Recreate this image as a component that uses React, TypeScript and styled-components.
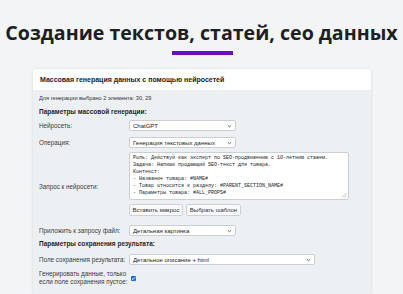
import React from "react";
import styled, { createGlobalStyle } from "styled-components";

const Global = createGlobalStyle`
  html, body { margin: 0; padding: 0; }
  body {
    background: #f2f4f6;
    font-family: "Liberation Sans", Arial, sans-serif;
    overflow: hidden;
  }
`;

const Page = styled.div`
  width: 403px;
  height: 294px;
  display: flex;
  flex-direction: column;
  align-items: stretch;
`;

const Hero = styled.header`
  display: flex;
  flex-direction: column;
  align-items: center;
  padding-top: 19px;
`;

const Title = styled.h1`
  margin: 0;
  font-family: "Open Sans", sans-serif;
  font-weight: 700;
  font-size: 19.6px;
  line-height: 27px;
  color: #1d1f22;
  white-space: nowrap;
`;

const Accent = styled.div`
  width: 61px;
  height: 4px;
  margin-top: 5px;
  margin-left: 2px;
  background: #6612bd;
`;

const Card = styled.section`
  margin: 14px 0 0 33px;
  width: 338px;
  flex: 1;
  background: #edf0f3;
  border-radius: 3px 3px 0 0;
  box-shadow: 0 0 3px rgba(0, 0, 0, 0.12);
  display: flex;
  flex-direction: column;
`;

const CardHeader = styled.div`
  height: 21px;
  background: #ffffff;
  border-radius: 3px 3px 0 0;
  display: flex;
  align-items: center;
  padding-left: 7px;
  font-weight: 700;
  font-size: 7px;
  color: #222;
`;

const CardBody = styled.div`
  padding: 4px 0 0 6px;
  display: flex;
  flex-direction: column;
`;

const Info = styled.div`
  font-size: 5.6px;
  line-height: 8px;
  color: #333;
`;

const Heading = styled.div<{ $mt: number }>`
  margin-top: ${(p) => p.$mt}px;
  font-size: 6.5px;
  line-height: 8px;
  font-weight: 700;
  color: #1f1f1f;
`;

const Row = styled.div<{ $mt: number; $align?: string }>`
  margin-top: ${(p) => p.$mt}px;
  display: grid;
  grid-template-columns: 90px 1fr;
  align-items: ${(p) => p.$align || "center"};
`;

const Label = styled.div<{ $pt?: number }>`
  font-size: 6.3px;
  line-height: 8px;
  color: #3a3a3a;
  padding-top: ${(p) => p.$pt || 0}px;
`;

const Select = styled.div<{ $w: number }>`
  width: ${(p) => p.$w}px;
  height: 11px;
  box-sizing: border-box;
  background: #fff;
  border: 1px solid #c9cfd5;
  border-radius: 2px;
  display: flex;
  align-items: center;
  justify-content: space-between;
  padding: 0 3px 0 3px;
  font-size: 6px;
  color: #222;
`;

const Chevron = () => (
  <svg width="5" height="4" viewBox="0 0 5 4">
    <path d="M0.8 1.2 L2.5 2.8 L4.2 1.2" stroke="#555" strokeWidth="0.9" fill="none" />
  </svg>
);

const Control = styled.div`
  display: flex;
  flex-direction: column;
`;

const TextArea = styled.div`
  position: relative;
  width: 220px;
  height: 48px;
  box-sizing: border-box;
  background: #fff;
  border: 1px solid #c9cfd5;
  border-radius: 2px;
  padding: 2px 3px;
  font-family: "Liberation Mono", "DejaVu Sans Mono", monospace;
  font-size: 5px;
  line-height: 7px;
  color: #222;
  white-space: pre;
  overflow: hidden;
`;

const Grip = styled.svg`
  position: absolute;
  right: 1px;
  bottom: 1px;
`;

const Buttons = styled.div`
  display: flex;
  gap: 3px;
  margin-top: 4px;
`;

const Button = styled.div<{ $w: number }>`
  width: ${(p) => p.$w}px;
  height: 12px;
  box-sizing: border-box;
  background: #f8f9fa;
  border: 1px solid #cdd2d7;
  border-radius: 2px;
  display: flex;
  align-items: center;
  justify-content: center;
  font-size: 6px;
  color: #333;
`;

const Check = styled.div`
  width: 5px;
  height: 5px;
  margin-left: 2px;
  background: #1a6fe0;
  border-radius: 1px;
  display: flex;
  align-items: center;
  justify-content: center;
`;

const prompt = [
  "Роль: Действуй как эксперт по SEO-продвижению с 10-летним стажем.",
  "Задача: Напиши продающий SEO-текст для товара.",
  "Контекст:",
  "- Название товара: #NAME#",
  "- Товар относится к разделу: #PARENT_SECTION_NAME#",
  "- Параметры товара: #ALL_PROPS#",
].join("\n");

export default function App() {
  return (
    <Page>
      <Global />
      <Hero>
        <Title>Создание текстов, статей, сео данных</Title>
        <Accent />
      </Hero>
      <Card>
        <CardHeader>Массовая генерация данных с помощью нейросетей</CardHeader>
        <CardBody>
          <Info>Для генерации выбрано 2 элемента: 30, 29</Info>
          <Heading $mt={6}>Параметры массовой генерации:</Heading>
          <Row $mt={4}>
            <Label>Нейросеть:</Label>
            <Select $w={107}>
              <span>ChatGPT</span>
              <Chevron />
            </Select>
          </Row>
          <Row $mt={6}>
            <Label>Операция:</Label>
            <Select $w={107}>
              <span>Генерация текстовых данных</span>
              <Chevron />
            </Select>
          </Row>
          <Row $mt={4}>
            <Label $pt={6}>Запрос к нейросети:</Label>
            <Control>
              <TextArea>
                {prompt}
                <Grip width="6" height="6" viewBox="0 0 6 6">
                  <path d="M5.5 1 L1 5.5 M5.5 3.5 L3.5 5.5" stroke="#999" strokeWidth="0.6" />
                </Grip>
              </TextArea>
              <Buttons>
                <Button $w={54}>Вставить макрос</Button>
                <Button $w={55}>Выбрать шаблон</Button>
              </Buttons>
            </Control>
          </Row>
          <Row $mt={9}>
            <Label>Приложить к запросу файл:</Label>
            <Select $w={107}>
              <span>Детальная картинка</span>
              <Chevron />
            </Select>
          </Row>
          <Heading $mt={4}>Параметры сохранения результата:</Heading>
          <Row $mt={6}>
            <Label>Поле сохранения результата:</Label>
            <Select $w={186}>
              <span>Детальное описание + html</span>
              <Chevron />
            </Select>
          </Row>
          <Row $mt={5}>
            <Label>
              Генерировать данные, только
              <br />
              если поле сохранения пустое:
            </Label>
            <Check>
              <svg width="5" height="5" viewBox="0 0 5 5">
                <path d="M1 2.6 L2.1 3.6 L4 1.3" stroke="#fff" strokeWidth="0.9" fill="none" />
              </svg>
            </Check>
          </Row>
        </CardBody>
      </Card>
    </Page>
  );
}
